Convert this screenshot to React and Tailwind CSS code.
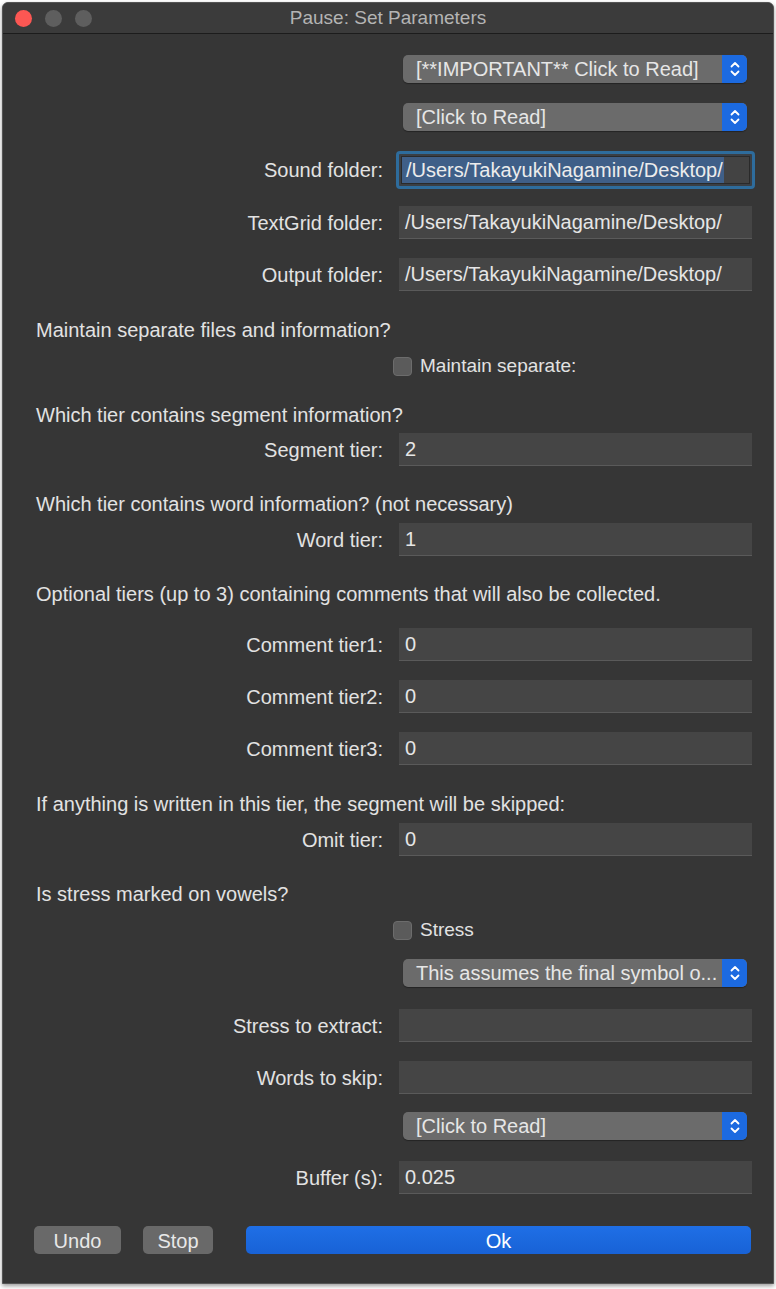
import React from "react";

const font = { fontFamily: '"Liberation Sans", Arial, sans-serif' };

function Stepper() {
  return (
    <span className="flex h-full w-[25px] items-center justify-center rounded-r-[5px] bg-[#1c6ae0]">
      <svg width="12" height="18" viewBox="0 0 12 18" fill="none" stroke="#ffffff" strokeWidth="1.8" strokeLinecap="round" strokeLinejoin="round">
        <path d="M2.5 6.5 L6 3 L9.5 6.5" />
        <path d="M2.5 11.5 L6 15 L9.5 11.5" />
      </svg>
    </span>
  );
}

function Popup({ text, className }) {
  return (
    <div className={`flex ${className}`}>
      <div className="ml-[400px] flex h-[28px] w-[344px] items-center overflow-hidden rounded-[5px] bg-[#6b6b6b] shadow-[0_1px_1px_rgba(0,0,0,0.35)]">
        <span className="flex-1 truncate pl-[13px] text-[20px] leading-[28px] text-[#e6e6e6]">{text}</span>
        <Stepper />
      </div>
    </div>
  );
}

function Field({ label, value, className, focused }) {
  return (
    <div className={`flex items-center ${className}`}>
      <span className="w-[380px] text-right text-[20px] leading-[26px] text-[#e2e2e2]">{label}</span>
      {focused ? (
        <div className="ml-[13px] flex h-[38px] w-[359px] items-center rounded-[4px] border-[3px] border-[#2e6c9c] bg-[#3a3f45] px-[2px]">
          <div className="flex h-[28px] w-full items-center overflow-hidden border border-[#2a2a2a] bg-[#434343]">
            <span className="whitespace-nowrap bg-[#3f5f88] pl-[4px] pr-[1px] text-[20px] leading-[26px] text-[#ececec]">{value}</span>
          </div>
        </div>
      ) : (
        <div className="ml-[16px] flex h-[33px] w-[353px] items-center overflow-hidden whitespace-nowrap border-b border-[#5a5a5a] bg-[#454545] pl-[6px] text-[20px] text-[#e6e6e6]">
          {value}
        </div>
      )}
    </div>
  );
}

function Heading({ children, className }) {
  return <div className={`h-[22px] whitespace-nowrap pl-[33px] text-[20px] leading-[22px] text-[#e2e2e2] ${className}`}>{children}</div>;
}

function Check({ label, className }) {
  return (
    <div className={`flex h-[22px] items-center ${className}`}>
      <span className="ml-[390px] h-[19px] w-[19px] rounded-[4px] border border-[#6c6c6c] bg-[#5b5b5b]" />
      <span className="ml-[8px] text-[19px] leading-[22px] text-[#e2e2e2]">{label}</span>
    </div>
  );
}

export default function App() {
  return (
    <div className="min-h-[1289px] bg-white" style={font}>
      <div className="ml-[2px] mt-[2px] h-[1282px] w-[772px] overflow-hidden rounded-t-[6px] border border-[#555555] bg-[#363636] shadow-[0_2px_4px_rgba(0,0,0,0.4)]">
        <div className="relative flex h-[31px] items-center border-b border-[#1c1c1c] bg-[#3b3b3b]">
          <div className="flex gap-[13px] pl-[12px]">
            <span className="h-[17px] w-[17px] rounded-full bg-[#fc5753]" />
            <span className="h-[17px] w-[17px] rounded-full bg-[#5e5e5e]" />
            <span className="h-[17px] w-[17px] rounded-full bg-[#5e5e5e]" />
          </div>
          <span className="absolute left-0 right-0 text-center text-[19px] text-[#b4b4b4]">Pause: Set Parameters</span>
        </div>

        <Popup text="[**IMPORTANT** Click to Read]" className="mt-[21px]" />
        <Popup text="[Click to Read]" className="mt-[20px]" />
        <Field label="Sound folder:" value="/Users/TakayukiNagamine/Desktop/" className="mt-[20px]" focused />
        <Field label="TextGrid folder:" value="/Users/TakayukiNagamine/Desktop/" className="mt-[17px]" />
        <Field label="Output folder:" value="/Users/TakayukiNagamine/Desktop/" className="mt-[19px]" />

        <Heading className="mt-[28px]">Maintain separate files and information?</Heading>
        <Check label="Maintain separate:" className="mt-[14px]" />

        <Heading className="mt-[27px]">Which tier contains segment information?</Heading>
        <Field label="Segment tier:" value="2" className="mt-[7px]" />

        <Heading className="mt-[27px]">Which tier contains word information? (not necessary)</Heading>
        <Field label="Word tier:" value="1" className="mt-[8px]" />

        <Heading className="mt-[27px]">Optional tiers (up to 3) containing comments that will also be collected.</Heading>
        <Field label="Comment tier1:" value="0" className="mt-[23px]" />
        <Field label="Comment tier2:" value="0" className="mt-[19px]" />
        <Field label="Comment tier3:" value="0" className="mt-[19px]" />

        <Heading className="mt-[28px]">If anything is written in this tier, the segment will be skipped:</Heading>
        <Field label="Omit tier:" value="0" className="mt-[8px]" />

        <Heading className="mt-[27px]">Is stress marked on vowels?</Heading>
        <Check label="Stress" className="mt-[14px]" />
        <Popup text="This assumes the final symbol o..." className="mt-[18px]" />
        <Field label="Stress to extract:" value="" className="mt-[22px]" />
        <Field label="Words to skip:" value="" className="mt-[19px]" />
        <Popup text="[Click to Read]" className="mt-[18px]" />
        <Field label="Buffer (s):" value="0.025" className="mt-[21px]" />

        <div className="mt-[32px] flex items-center pl-[31px]">
          <button className="h-[28px] w-[87px] rounded-[5px] bg-[#696969] text-[20px] text-[#e8e8e8]">Undo</button>
          <button className="ml-[22px] h-[28px] w-[70px] rounded-[5px] bg-[#696969] text-[20px] text-[#e8e8e8]">Stop</button>
          <button className="ml-[33px] h-[28px] w-[505px] rounded-[5px] bg-gradient-to-b from-[#1f6fe6] to-[#1862d6] text-[20px] text-white">Ok</button>
        </div>
      </div>
    </div>
  );
}
